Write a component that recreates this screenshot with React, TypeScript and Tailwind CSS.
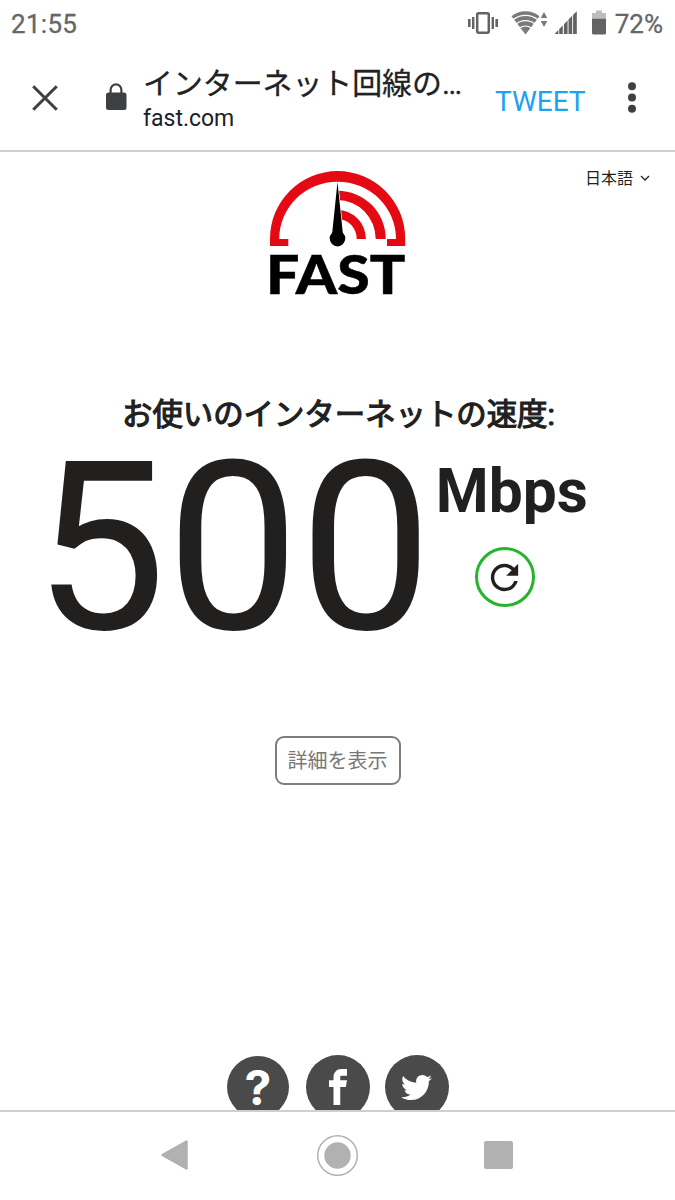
import React from "react";
import { FaTwitter } from "react-icons/fa";
import { ImFacebook } from "react-icons/im";
import { MdRefresh } from "react-icons/md";

const fontStack = "font-['Roboto','Noto_Sans_CJK_JP',sans-serif]";

function StatusIcons() {
  return (
    <svg width="142" height="28" viewBox="0 0 142 28" fill="#636363">
      {/* vibrate */}
      <rect x="10.2" y="3.2" width="11.6" height="19.6" rx="1.5" fill="none" stroke="#636363" strokeWidth="2.5" />
      <rect x="1" y="9" width="2.6" height="8" />
      <rect x="5" y="7" width="2.4" height="12" />
      <rect x="24.6" y="7" width="2.4" height="12" />
      <rect x="28.4" y="9" width="2.6" height="8" />
      {/* wifi + traffic arrows */}
      <path d="M44.5 6.2 A22 22 0 0 1 72.5 6.2 L58.5 24.5 Z" fill="#7a7a7a" />
      <g fill="none" stroke="#fff" strokeWidth="1.3">
        <path d="M46 9.8 A20 20 0 0 1 71 9.8" />
        <path d="M49 14 A15 15 0 0 1 68 14" />
        <path d="M52.5 18.2 A10 10 0 0 1 64.5 18.2" />
      </g>
      <path d="M77 2 L80.3 8 H73.7 Z M77 17 L80.3 11 H73.7 Z" fill="#7a7a7a" />
      {/* signal */}
      <path d="M87.5 24 L91.3 20 V24 Z M92.2 19 L95.8 15.4 V24 H92.2 Z M96.9 14.3 L100.6 10.5 V24 H96.9 Z M101.5 9.6 L105.2 5.8 V24 H101.5 Z M106.1 4.8 L109.8 1.2 V24 H106.1 Z" />
      {/* battery */}
      <path d="M129 0.5 H135 V3 H139 V9 H125 V3 H129 Z" fill="#bdbdbd" />
      <path d="M125 8.8 H139 V23 Q139 24.5 137.5 24.5 H126.5 Q125 24.5 125 23 Z" />
    </svg>
  );
}

function StatusBar() {
  return (
    <div className="flex h-[48px] shrink-0 items-center justify-between pr-[12px] pl-[11px] text-[26px] text-[#666] [-webkit-text-stroke:0.3px_#666]">
      <span className="tracking-[0.3px]">21:55</span>
      <div className="flex items-center gap-[6px]">
        <StatusIcons />
        <span>72%</span>
      </div>
    </div>
  );
}

function BrowserBar() {
  return (
    <header className="flex h-[104px] shrink-0 items-start border-b-2 border-[#cfcfcf] text-[#202124]">
      <svg className="mt-[37px] ml-[32px] shrink-0" width="26" height="26" viewBox="0 0 26 26">
        <path d="M1.2 1.2 L24.8 24.8 M24.8 1.2 L1.2 24.8" stroke="#3c4043" strokeWidth="3" />
      </svg>
      <svg className="mt-[35px] ml-[47px] shrink-0" width="22" height="28" viewBox="0 0 22 28">
        <path d="M5.6 11 V6.8 A5.2 5.2 0 0 1 16.4 6.8 V11" fill="none" stroke="#3c4043" strokeWidth="2.2" />
        <rect x="1" y="9.5" width="20.5" height="17.5" rx="2.5" fill="#3c4043" />
      </svg>
      <div className="mt-[17px] ml-[16px] w-[352px]">
        <div className="text-[29.9px] leading-[38px] whitespace-nowrap [-webkit-text-stroke:0.3px_#202124]">
          インターネット回線の…
        </div>
        <div className="text-[23px] leading-[32px]">fast.com</div>
      </div>
      <button className="mt-[35px] text-[28px] leading-[37px] text-[#1da1f2]">TWEET</button>
      <svg className="mt-[34px] ml-[41px] shrink-0" width="10" height="32" viewBox="0 0 10 32" fill="#3c4043">
        <circle cx="5" cy="4.3" r="4" />
        <circle cx="5" cy="15.6" r="4" />
        <circle cx="5" cy="26.8" r="4" />
      </svg>
    </header>
  );
}

function FastLogo() {
  return (
    <svg className="overflow-visible" width="138" height="126" viewBox="0 0 138 126">
      <g fill="#e50914">
        <path d="M1 76 V68.7 A67.6 67.6 0 0 1 136.2 68.7 V76 H118 V69 H127 A58.4 57.3 0 0 0 10.2 69 H19.3 V76 Z" />
        <path d="M68.5 20.7 A48.2 48.2 0 0 1 116.7 69 H106.7 A38.2 39 0 0 0 68.5 30 Z" />
        <path d="M68.5 40 A28.4 29 0 0 1 96.9 69 H87.7 A19.2 20 0 0 0 68.5 49 Z" />
      </g>
      <path d="M68.5 12 L74.3 68 H62.7 Z" fill="#000" stroke="#fff" strokeWidth="1.4" paintOrder="stroke" />
      <circle cx="68.5" cy="68.6" r="7.8" />
      <text
        x="-3"
        y="124"
        fontSize="54"
        textLength="139.5"
        lengthAdjust="spacingAndGlyphs"
        stroke="#000"
        strokeWidth="0.5"
        className="font-['Lato',sans-serif] font-black"
      >
        FAST
      </text>
    </svg>
  );
}

function SpeedResult() {
  return (
    <div className="mt-[25px] flex items-start pl-[33.5px] text-[#221f1f]">
      <span className="text-[236.5px] leading-[176px]">500</span>
      <div className="ml-[3.5px] flex flex-col items-start">
        <span className="text-[60.5px] leading-[62px] font-bold">Mbps</span>
        <button className="mt-[24px] ml-[39px] flex h-[60px] w-[60px] items-center justify-center rounded-full border-[3px] border-[#27b42c]">
          <MdRefresh size={41} />
        </button>
      </div>
    </div>
  );
}

function SocialLinks() {
  return (
    <div className="mt-[270px] flex items-start pl-[227px] text-white">
      <a className="mt-[1px] flex h-[62px] w-[62px] shrink-0 items-start justify-center rounded-full bg-[#4a4a4a] pt-[12px] font-['Inter',sans-serif] text-[48px] leading-[40px] font-bold">
        ?
      </a>
      <a className="ml-[17px] flex h-[64px] w-[64px] shrink-0 items-center justify-center rounded-full bg-[#4a4a4a] pr-[1px]">
        <ImFacebook size={36} />
      </a>
      <a className="ml-[15px] flex h-[64px] w-[64px] shrink-0 items-center justify-center rounded-full bg-[#4a4a4a] pr-[1px]">
        <FaTwitter size={31} />
      </a>
    </div>
  );
}

function NavBar() {
  return (
    <nav className="flex h-[90px] shrink-0 items-center border-t-2 border-[#cfcfcf] pb-[2px] pl-[160px]">
      <svg width="28" height="32" viewBox="0 0 28 32">
        <path d="M2.5 16 L26.5 2.5 V29.5 Z" fill="#b1b1b1" stroke="#b1b1b1" strokeWidth="2.5" strokeLinejoin="round" />
      </svg>
      <svg className="ml-[128px]" width="43" height="43" viewBox="0 0 43 43">
        <circle cx="21.5" cy="21.5" r="19.8" fill="none" stroke="#b1b1b1" strokeWidth="1.5" />
        <circle cx="21.5" cy="21.5" r="13.2" fill="#b1b1b1" />
      </svg>
      <div className="ml-[125px] h-[28px] w-[29px] rounded-[2px] bg-[#b1b1b1]" />
    </nav>
  );
}

export default function App() {
  return (
    <div className={`flex h-[1200px] w-[675px] flex-col overflow-hidden bg-white ${fontStack}`} lang="ja">
      <StatusBar />
      <BrowserBar />

      <main className="flex h-[958px] shrink-0 flex-col overflow-hidden pt-[18px]">
        <div className="grid grid-cols-[1fr_138px_1fr]">
          <div />
          <FastLogo />
          <div className="flex h-[18px] items-center justify-end gap-[7px] pr-[25px] text-[16px] text-[#221f1f]">
            <span>日本語</span>
            <svg className="-mt-[3px]" width="10" height="8" viewBox="0 0 10 8">
              <path d="M1 2 L5 6 L9 2" fill="none" stroke="#221f1f" strokeWidth="1.3" />
            </svg>
          </div>
        </div>

        <h1 className="mt-[99px] mb-px pl-[122px] text-[30.4px] leading-[40px] whitespace-nowrap text-[#221f1f] [-webkit-text-stroke:1.2px_#221f1f]">
          お使いのインターネットの速度:
        </h1>
        <SpeedResult />

        <button className="mt-[99px] h-[49px] w-[126px] shrink-0 self-center rounded-[9px] border-2 border-[#7d7d7d] text-[20px] text-[#777]">
          詳細を表示
        </button>
        <SocialLinks />
      </main>

      <NavBar />
    </div>
  );
}
